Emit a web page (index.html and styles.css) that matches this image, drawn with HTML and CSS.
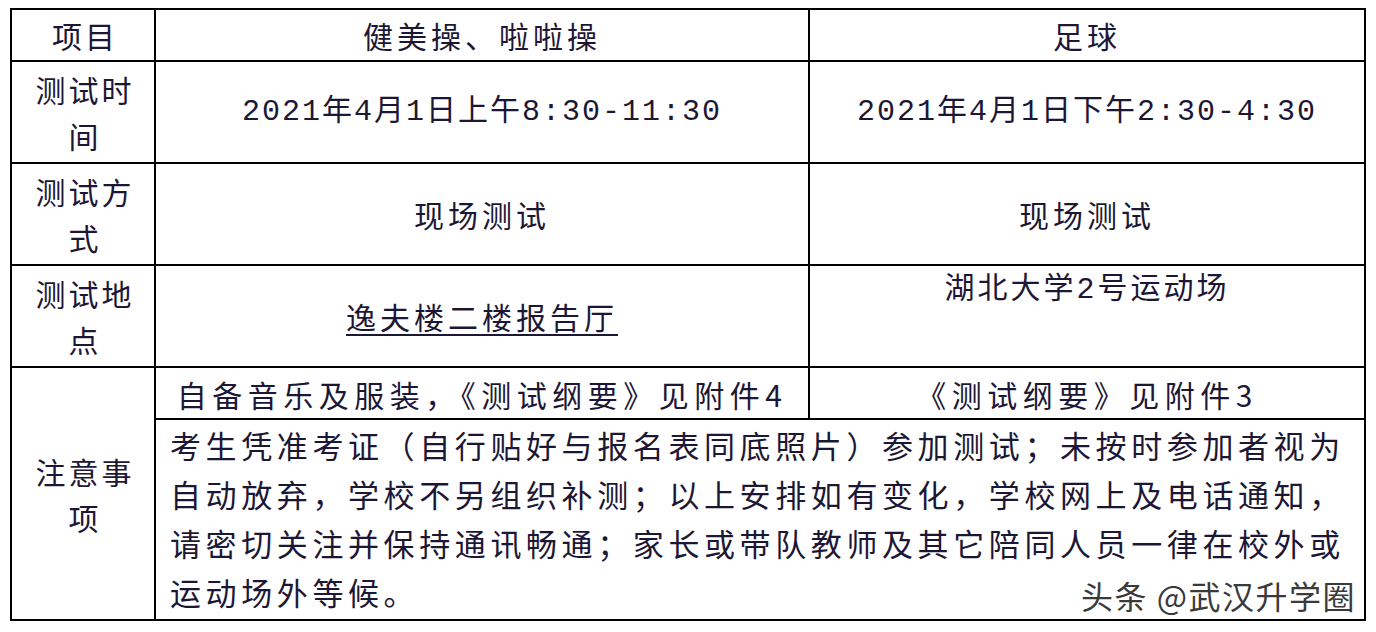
FILE: index.html
```html
<!DOCTYPE html>
<html lang="zh-CN">
<head>
<meta charset="utf-8">
<title>测试安排</title>
<link rel="stylesheet" href="styles.css">
</head>
<body>
<div class="wrap">
  <table class="sched">
    <colgroup>
      <col class="c1"><col class="c2"><col class="c3">
    </colgroup>
    <tr class="r-head">
      <th class="lab">项目</th>
      <td class="val">健美操、啦啦操</td>
      <td class="val">足球</td>
    </tr>
    <tr class="r-tall">
      <th class="lab">测试时间</th>
      <td class="val num">2021年4月1日上午8:30-11:30</td>
      <td class="val num">2021年4月1日下午2:30-4:30</td>
    </tr>
    <tr class="r-tall">
      <th class="lab">测试方式</th>
      <td class="val">现场测试</td>
      <td class="val">现场测试</td>
    </tr>
    <tr class="r-tall">
      <th class="lab">测试地点</th>
      <td class="val"><span class="ul">逸夫楼二楼报告厅</span></td>
      <td class="val top num">湖北大学2号运动场</td>
    </tr>
    <tr class="r-head">
      <th class="lab" rowspan="2">注意事项</th>
      <td class="val wide">自备音乐及服装，《测试纲要》见附件4</td>
      <td class="val wide">《测试纲要》见附件3</td>
    </tr>
    <tr class="r-note">
      <td class="note" colspan="2">考生凭准考证（自行贴好与报名表同底照片）参加测试；未按时参加者视为自动放弃，学校不另组织补测；以上安排如有变化，学校网上及电话通知，请密切关注并保持通讯畅通；家长或带队教师及其它陪同人员一律在校外或运动场外等候。<span class="mark">头条 @武汉升学圈</span></td>
    </tr>
  </table>
</div>
</body>
</html>
```

FILE: styles.css
```css
html, body {
  margin: 0;
  padding: 0;
  background: #ffffff;
}
body {
  font-family: "Noto Sans CJK SC", "Noto Sans", sans-serif;
  color: #1d1736;
}
.wrap {
  width: 1354px;
  margin: 8px 0 0 10px;
}
.sched {
  border-collapse: collapse;
  width: 1354px;
  table-layout: fixed;
}
.c1 { width: 144px; }
.c2 { width: 654px; }
.c3 { width: 556px; }
.sched th, .sched td {
  border: 2px solid #000;
  padding: 0;
  font-weight: normal;
}
.r-head { height: 52px; }
.r-tall { height: 102px; }
.r-note { height: 201px; }
.sched .lab {
  font-size: 30px;
  letter-spacing: 3px;
  line-height: 46px;
  text-align: center;
  vertical-align: middle;
  padding: 0 16px 0 20px;
}
.sched .val {
  font-size: 30px;
  letter-spacing: 4px;
  text-align: center;
  vertical-align: middle;
  line-height: 40px;
}
.sched .num {
  font-family: "Liberation Mono", "Noto Sans CJK SC", monospace;
  letter-spacing: 2px;
}
.sched .top {
  vertical-align: top;
  padding-top: 4px;
  letter-spacing: 3px;
}
.sched .wide {
  letter-spacing: 5.5px;
  padding-top: 2px;
}
.ul {
  text-decoration: underline;
  text-underline-offset: 5px;
  text-decoration-thickness: 2px;
}
.sched .note {
  font-size: 31px;
  letter-spacing: 4.6px;
  line-height: 49px;
  text-align: left;
  vertical-align: top;
  padding: 0 8px 0 14px;
}
.mark {
  float: right;
  margin-top: 8px;
  font-family: "Noto Sans CJK SC", sans-serif;
  font-size: 32px;
  letter-spacing: 1.5px;
  color: #3a3a3a;
  text-shadow: 1px 1px 0 #fff, -1px -1px 0 #fff, 2px 2px 1px #fff;
  line-height: 40px;
}
```
